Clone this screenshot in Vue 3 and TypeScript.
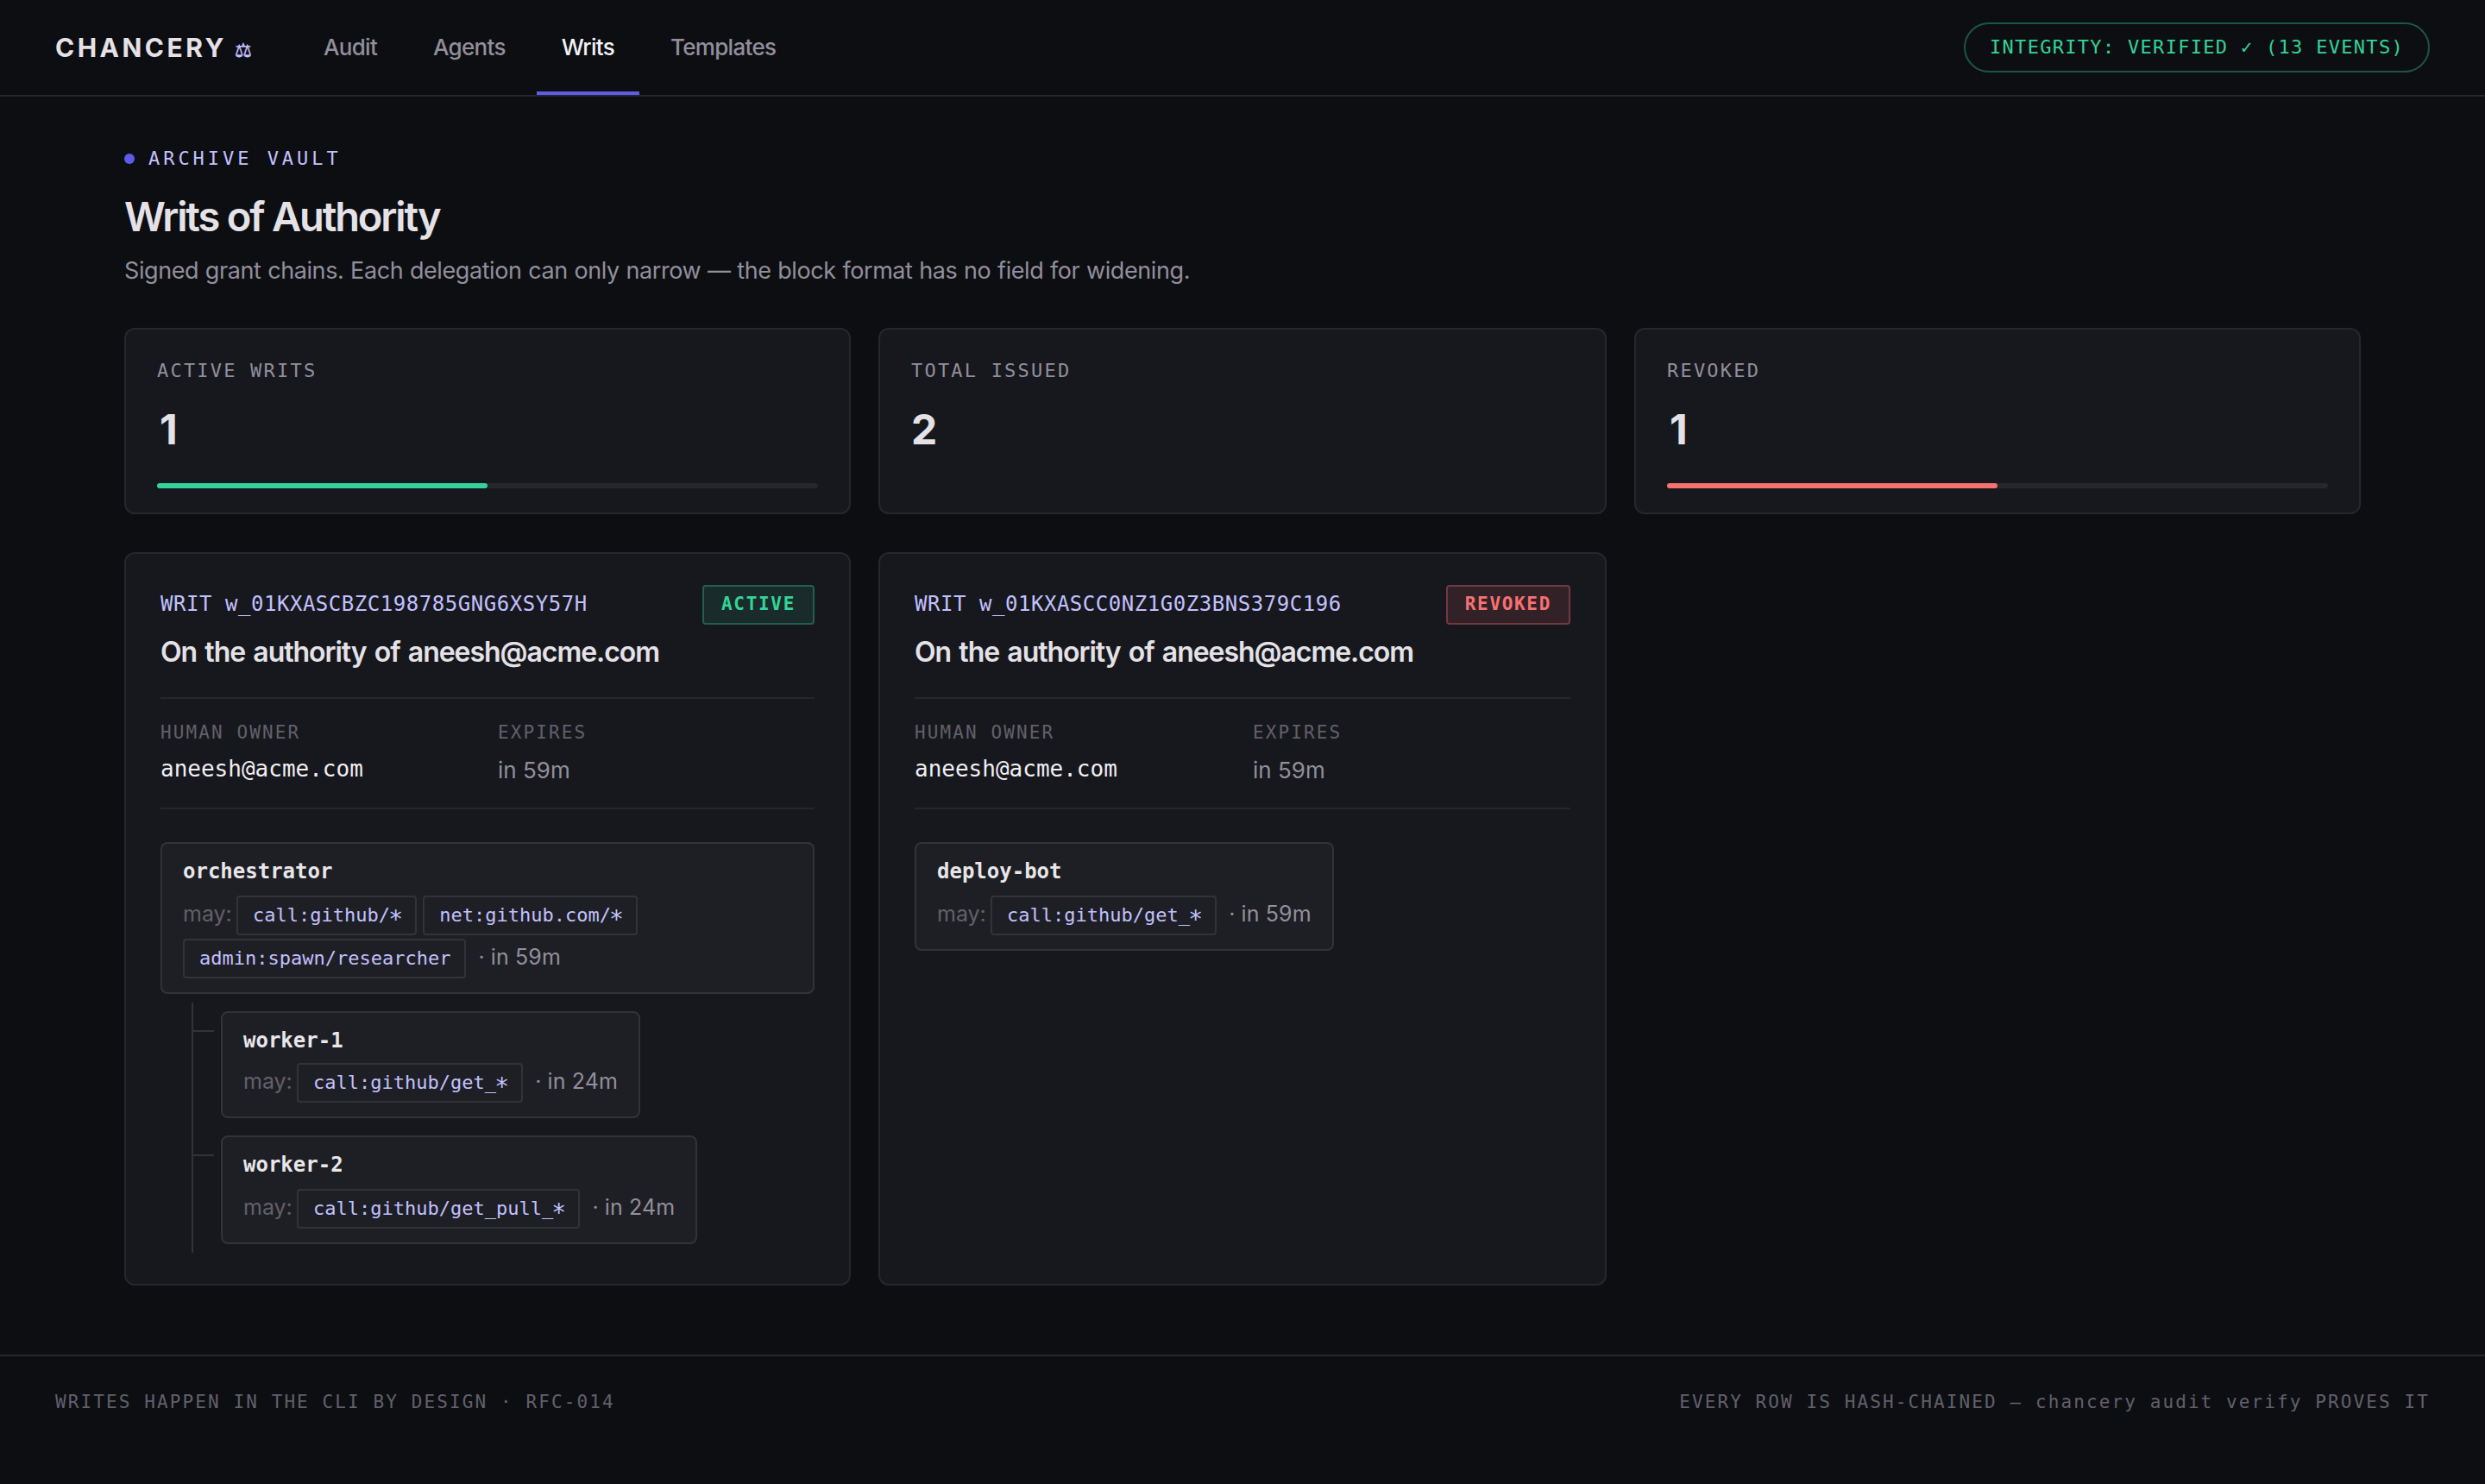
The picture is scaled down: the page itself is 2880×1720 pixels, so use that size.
<script setup lang="ts">
interface Stat {
  label: string
  value: number
  bar?: { tone: 'green' | 'red'; percent: number }
}

interface Grant {
  name: string
  scopes: string[]
  expires: string
  children?: Grant[]
}

interface Writ {
  id: string
  status: 'active' | 'revoked'
  owner: string
  expires: string
  root: Grant
}

const navItems = ['Audit', 'Agents', 'Writs', 'Templates']
const currentNav = 'Writs'

const stats: Stat[] = [
  { label: 'ACTIVE WRITS', value: 1, bar: { tone: 'green', percent: 50 } },
  { label: 'TOTAL ISSUED', value: 2 },
  { label: 'REVOKED', value: 1, bar: { tone: 'red', percent: 50 } },
]

const writs: Writ[] = [
  {
    id: 'w_01KXASCBZC198785GNG6XSY57H',
    status: 'active',
    owner: 'aneesh@acme.com',
    expires: 'in 59m',
    root: {
      name: 'orchestrator',
      scopes: ['call:github/*', 'net:github.com/*', 'admin:spawn/researcher'],
      expires: 'in 59m',
      children: [
        { name: 'worker-1', scopes: ['call:github/get_*'], expires: 'in 24m' },
        { name: 'worker-2', scopes: ['call:github/get_pull_*'], expires: 'in 24m' },
      ],
    },
  },
  {
    id: 'w_01KXASCC0NZ1G0Z3BNS379C196',
    status: 'revoked',
    owner: 'aneesh@acme.com',
    expires: 'in 59m',
    root: { name: 'deploy-bot', scopes: ['call:github/get_*'], expires: 'in 59m' },
  },
]

const hasWildcard = (scope: string) => scope.endsWith('*')
const scopeBase = (scope: string) => (hasWildcard(scope) ? scope.slice(0, -1) : scope)
</script>

<template>
  <div class="page">
    <header class="topbar">
      <div class="logo">CHANCERY<span class="logo-mark">⚖</span></div>
      <nav class="nav">
        <a
          v-for="item in navItems"
          :key="item"
          class="nav-item"
          :class="{ current: item === currentNav }"
        >{{ item }}</a>
      </nav>
      <div class="integrity">INTEGRITY: VERIFIED ✓ (13 EVENTS)</div>
    </header>

    <main class="main">
      <div class="eyebrow"><span class="dot"></span>ARCHIVE VAULT</div>
      <h1 class="title">Writs of Authority</h1>
      <p class="subtitle">Signed grant chains. Each delegation can only narrow — the block format has no field for widening.</p>

      <section class="grid stats">
        <div v-for="stat in stats" :key="stat.label" class="card stat">
          <div class="stat-label">{{ stat.label }}</div>
          <div class="stat-value" :class="{ narrow: stat.value === 1 }">{{ stat.value }}</div>
          <div v-if="stat.bar" class="bar">
            <div class="bar-fill" :class="stat.bar.tone" :style="{ width: stat.bar.percent + '%' }"></div>
          </div>
        </div>
      </section>

      <section class="grid writs">
        <article v-for="writ in writs" :key="writ.id" class="card writ">
          <div class="writ-head">
            <div>
              <div class="writ-id">WRIT {{ writ.id }}</div>
              <h2 class="writ-title">On the authority of {{ writ.owner }}</h2>
            </div>
            <span class="badge" :class="writ.status">{{ writ.status.toUpperCase() }}</span>
          </div>

          <div class="meta">
            <div>
              <div class="meta-label">HUMAN OWNER</div>
              <div class="meta-owner">{{ writ.owner }}</div>
            </div>
            <div>
              <div class="meta-label">EXPIRES</div>
              <div class="meta-expires">{{ writ.expires }}</div>
            </div>
          </div>

          <div class="node">
            <div class="node-name">{{ writ.root.name }}</div>
            <div class="grants">
              <span class="may">may:</span>
              <code v-for="scope in writ.root.scopes" :key="scope" class="chip">{{ scopeBase(scope) }}<span v-if="hasWildcard(scope)" class="star">*</span></code>
              <span class="ttl">· {{ writ.root.expires }}</span>
            </div>
          </div>

          <ul v-if="writ.root.children" class="children">
            <li v-for="child in writ.root.children" :key="child.name" class="child">
              <div class="node">
                <div class="node-name">{{ child.name }}</div>
                <div class="grants">
                  <span class="may">may:</span>
                  <code v-for="scope in child.scopes" :key="scope" class="chip">{{ scopeBase(scope) }}<span v-if="hasWildcard(scope)" class="star">*</span></code>
                  <span class="ttl">· {{ child.expires }}</span>
                </div>
              </div>
            </li>
          </ul>
        </article>
      </section>
    </main>

    <footer class="footer">
      <span>WRITES HAPPEN IN THE CLI BY DESIGN · RFC-014</span>
      <span>EVERY ROW IS HASH-CHAINED — chancery audit verify PROVES IT</span>
    </footer>
  </div>
</template>

<style>
body {
  margin: 0;
  background: #0d0e12;
}
</style>

<style scoped>
.page {
  --mono: 'DejaVu Sans Mono', 'Liberation Mono', monospace;
  --text: #e4e2e7;
  --muted: #918f9c;
  --dim: #62606b;
  --lavender: #c2c1ff;
  --line: #26272b;
  --line-strong: #323337;
  box-sizing: border-box;
  width: 100%;
  min-height: 1720px;
  background: #0d0e12;
  color: var(--text);
  font-family: Inter, sans-serif;
  font-size: 26px;
}

.topbar {
  display: flex;
  align-items: center;
  height: 110px;
  padding: 0 64px;
  border-bottom: 2px solid var(--line);
}

.logo {
  width: 282px;
  font-size: 30px;
  font-weight: 700;
  letter-spacing: 3.5px;
  white-space: nowrap;
}

.logo-mark {
  margin-left: 9px;
  color: var(--lavender);
  font-family: 'DejaVu Sans', sans-serif;
  font-size: 22px;
  font-weight: 400;
  letter-spacing: 0;
  -webkit-text-stroke: 0.5px var(--lavender);
}

.nav {
  display: flex;
  align-self: stretch;
  gap: 7px;
}

.nav-item {
  display: flex;
  align-items: center;
  padding: 3px 29px 0;
  border-bottom: 4px solid transparent;
  color: var(--muted);
  font-weight: 500;
  letter-spacing: -0.7px;
}

.nav-item.current {
  border-bottom-color: #5e5ce6;
  color: #f4f3f6;
}

.integrity {
  margin-left: auto;
  padding: 0 28px 1px;
  border: 2px solid #1b5641;
  border-radius: 29px;
  color: #34d399;
  font-family: var(--mono);
  font-size: 22px;
  line-height: 53px;
  letter-spacing: 1.3px;
  white-space: nowrap;
}

.main {
  padding: 58px 144px 0;
}

.eyebrow {
  display: flex;
  align-items: center;
  gap: 16px;
  color: var(--lavender);
  font-family: var(--mono);
  font-size: 22px;
  line-height: 28px;
  letter-spacing: 0.18em;
}

.dot {
  width: 12px;
  height: 12px;
  border-radius: 50%;
  background: #5e5ce6;
}

.title {
  margin: 25px 0 0;
  font-size: 47px;
  font-weight: 600;
  line-height: 56px;
  letter-spacing: -2.15px;
}

.subtitle {
  margin: 15px 0 0;
  color: var(--muted);
  font-size: 27px;
  line-height: 40px;
  letter-spacing: -0.41px;
  word-spacing: 0.5px;
}

.grid {
  display: grid;
  grid-template-columns: 842px 844px 842px;
  gap: 32px;
}

.stats {
  margin-top: 46px;
}

.writs {
  margin-top: 44px;
}

.card {
  box-sizing: border-box;
  border: 2px solid var(--line);
  border-radius: 12px;
  background: #17181d;
}

.stat {
  padding: 34px 36px 28px;
}

.stat-label {
  color: var(--muted);
  font-family: var(--mono);
  font-size: 22px;
  line-height: 28px;
  letter-spacing: 0.1em;
}

.stat-value {
  margin-top: 26px;
  font-size: 48px;
  font-weight: 700;
  line-height: 56px;
}

.stat-value.narrow {
  padding-left: 3px;
}

.bar {
  height: 6px;
  margin-top: 34px;
  border-radius: 3px;
  background: var(--line);
}

.bar-fill {
  height: 100%;
  border-radius: 3px;
}

.bar-fill.green {
  background: #34d399;
}

.bar-fill.red {
  background: #f87171;
}

.writ {
  padding: 36px 40px;
}

.writ-head {
  display: flex;
  justify-content: space-between;
  align-items: flex-start;
}

.writ-id {
  margin-top: 7px;
  color: var(--lavender);
  font-family: var(--mono);
  font-size: 24px;
  line-height: 30px;
  letter-spacing: 0.54px;
}

.writ-title {
  margin: 21px 0 0;
  font-size: 32px;
  font-weight: 600;
  line-height: 40px;
  letter-spacing: -1.04px;
  word-spacing: 2.2px;
}

.badge {
  padding: 0 20px 1px;
  border: 2px solid;
  border-radius: 4px;
  font-family: var(--mono);
  font-size: 21px;
  font-weight: 700;
  line-height: 41px;
  letter-spacing: 0.08em;
}

.badge.active {
  border-color: #225f4d;
  background: #1a2b2b;
  color: #34d399;
}

.badge.revoked {
  border-color: #713a3e;
  background: #322227;
  color: #f87171;
}

.meta {
  box-sizing: border-box;
  display: grid;
  grid-template-columns: 1fr 1fr;
  column-gap: 24px;
  height: 130px;
  margin-top: 32px;
  padding-top: 26px;
  border-top: 2px solid var(--line);
  border-bottom: 2px solid var(--line);
}

.meta-label {
  color: var(--dim);
  font-family: var(--mono);
  font-size: 21px;
  line-height: 26px;
  letter-spacing: 0.1em;
}

.meta-owner {
  margin-top: 12px;
  color: #f0eff2;
  font-family: var(--mono);
  line-height: 34px;
}

.meta-expires {
  margin-top: 14px;
  color: var(--muted);
  line-height: 34px;
}

.node {
  box-sizing: border-box;
  width: fit-content;
  padding: 17px 24px 16px;
  border: 2px solid var(--line-strong);
  border-radius: 8px;
  background: #1e1f24;
}

.meta + .node {
  margin-top: 38px;
}

.node-name {
  color: #e8e6ea;
  font-family: var(--mono);
  font-size: 24px;
  font-weight: 700;
  line-height: 30px;
}

.grants {
  display: flex;
  flex-wrap: wrap;
  align-items: baseline;
  row-gap: 4px;
  margin-top: 13px;
}

.may {
  width: 62px;
  color: var(--dim);
  font-size: 25px;
  line-height: 30px;
}

.chip {
  padding: 0 16px 1px 17px;
  border: 2px solid var(--line-strong);
  border-radius: 4px;
  color: var(--lavender);
  font-family: var(--mono);
  font-size: 22px;
  line-height: 41px;
}

.chip + .chip {
  margin-left: 7px;
}

.chip:nth-child(4) {
  margin-left: 0;
}

/* The wildcard sits at mid-height, larger than the font's raised asterisk. */
.star {
  margin: 0 -1.8px;
  font-size: 28px;
  line-height: 0;
  vertical-align: -7px;
}

.ttl {
  margin-left: 14px;
  color: var(--muted);
  font-size: 25px;
  line-height: 30px;
  letter-spacing: 0.1px;
}

.children {
  margin: 10px 0 0 36px;
  padding: 0;
  border-left: 2px solid var(--line-strong);
  list-style: none;
}

.child {
  position: relative;
  padding: 10px 0 10px 32px;
}

.child::before {
  content: '';
  position: absolute;
  top: 32px;
  left: 0;
  width: 24px;
  height: 2px;
  background: var(--line-strong);
}

.child:first-child .grants {
  margin-top: 11px;
}

.footer {
  display: flex;
  justify-content: space-between;
  margin-top: 80px;
  padding: 38px 64px 0;
  border-top: 2px solid var(--line);
  color: var(--dim);
  font-family: var(--mono);
  font-size: 21px;
  line-height: 30px;
  letter-spacing: 0.1em;
}
</style>
